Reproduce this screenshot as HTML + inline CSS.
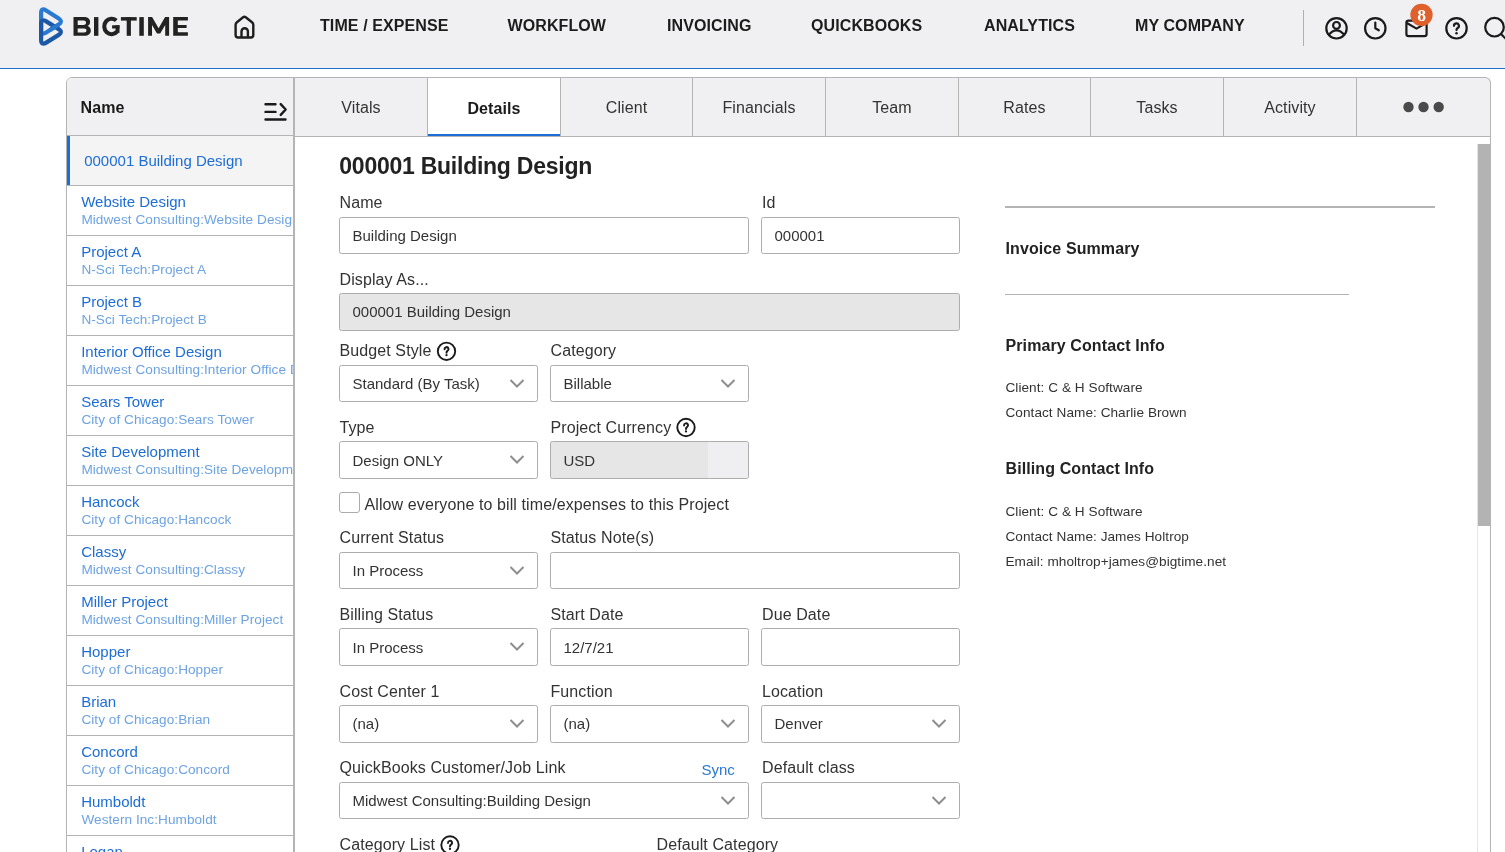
<!DOCTYPE html>
<html><head><meta charset="utf-8"><style>
*{margin:0;padding:0;box-sizing:border-box}
html,body{width:1505px;height:852px;overflow:hidden;background:#fff;font-family:"Liberation Sans",sans-serif;color:#333}
.a{position:absolute;white-space:nowrap;line-height:1}
.r{position:absolute}
svg{position:absolute;overflow:visible}
</style></head><body>
<div id="root" style="position:absolute;left:0;top:0;width:1505px;height:852px;overflow:hidden;will-change:transform">
<div class="r" style="left:0;top:0;width:1505px;height:68px;background:#f0f0f3"></div>
<div class="r" style="left:0;top:68px;width:1505px;height:1px;background:#1f70cf"></div>
<svg style="left:0;top:0" width="1505" height="68">
<path d="M41.10 13.20 Q41.10 7.20 46.14 10.45 L58.36 18.35 Q63.40 21.60 58.34 24.82 L46.16 32.58 Q41.10 35.80 41.10 29.80 Z" fill="none" stroke="#2a7ad2" stroke-width="4.2"/><path d="M41.10 24.20 Q41.10 18.20 46.20 21.36 L58.30 28.84 Q63.40 32.00 58.30 35.16 L46.20 42.64 Q41.10 45.80 41.10 39.80 Z" fill="none" stroke="#1c58a5" stroke-width="4.2"/><path d="M58.5 24.7 L50 30.1" fill="none" stroke="#2a7ad2" stroke-width="4.2" stroke-linecap="butt"/>
<path d="M235.6 24.8 Q235.6 23.2 236.9 22.2 L243.1 17.2 Q244.4 16.2 245.7 17.2 L252 22.2 Q253.3 23.2 253.3 24.8 V35 Q253.3 37.5 250.8 37.5 H238.1 Q235.6 37.5 235.6 35 Z" fill="none" stroke="#1e1e1e" stroke-width="2.4" stroke-linejoin="round"/>
<path d="M241.5 37.5 V31.4 A3.2 3.2 0 0 1 247.9 31.4 V37.5" fill="none" stroke="#1e1e1e" stroke-width="2.4"/>
<line x1="1303.5" y1="10" x2="1303.5" y2="46" stroke="#b0b0b0" stroke-width="1"/>
<circle cx="1336.5" cy="28.3" r="10.2" fill="none" stroke="#1a1a1a" stroke-width="2.2"/>
<circle cx="1336.5" cy="25.4" r="3.4" fill="none" stroke="#1a1a1a" stroke-width="2.2"/>
<path d="M1328.4 35.2 Q1336.5 25.6 1344.6 35.2" fill="none" stroke="#1a1a1a" stroke-width="2.2"/>
<circle cx="1375.3" cy="28.3" r="10.2" fill="none" stroke="#1a1a1a" stroke-width="2.2"/>
<path d="M1375.3 22.5 V28.3 L1378.8 30.3" fill="none" stroke="#1a1a1a" stroke-width="2.2" stroke-linecap="round" stroke-linejoin="round"/>
<rect x="1406.4" y="20.6" width="20.2" height="15.6" rx="2.2" fill="none" stroke="#1a1a1a" stroke-width="2.2"/>
<path d="M1406.8 23 L1416.5 28.6 L1426.2 23" fill="none" stroke="#1a1a1a" stroke-width="2.2"/>
<circle cx="1421.5" cy="14.8" r="11.15" fill="#e0602b"/>
<circle cx="1456.5" cy="28.3" r="10.2" fill="none" stroke="#1a1a1a" stroke-width="2.2"/>
<path d="M1454 25.8 A2.45 2.45 0 1 1 1457.6 28 Q1456.5 28.7 1456.5 30.1" fill="none" stroke="#1a1a1a" stroke-width="2.2" stroke-linecap="round"/><circle cx="1456.5" cy="33.2" r="1.25" fill="#1a1a1a"/>
<circle cx="1494.5" cy="27.2" r="9.3" fill="none" stroke="#1a1a1a" stroke-width="2.2"/>
<line x1="1501" y1="34" x2="1508" y2="41" stroke="#1a1a1a" stroke-width="2.2"/>
</svg>
<svg style="left:0;top:0" width="200" height="60"><g fill="#222">
<path fill-rule="evenodd" d="M73.5 17.1 H84.2 C88.2 17.1 90.1 19.3 90.1 21.9 C90.1 23.8 89.1 25.2 87.7 25.9 C89.7 26.5 90.8 28.2 90.8 30.5 C90.8 33.7 88.5 35.8 84.3 35.8 H73.5 Z M77.7 20.5 H83.6 C85.2 20.5 86 21.4 86 22.7 C86 24 85.2 24.9 83.6 24.9 H77.7 Z M77.7 28.4 H84.1 C85.7 28.4 86.5 29.3 86.5 30.4 C86.5 31.5 85.7 32.4 84.1 32.4 H77.7 Z"/>
<rect x="94" y="17.1" width="4.4" height="18.7"/>
<path d="M116.3 20.6 A7.3 7.75 0 1 0 117 31.6" fill="none" stroke="#222" stroke-width="4.1"/>
<rect x="112.1" y="25.3" width="7.4" height="3.2"/><rect x="115.5" y="25.3" width="4" height="7.6"/>
<rect x="120.9" y="17.1" width="15.8" height="3.5"/><rect x="126.7" y="17.1" width="4.2" height="18.7"/>
<rect x="139.3" y="17.1" width="4.5" height="18.7"/>
<path d="M148.1 35.8 V17.1 H152.1 L158.6 28.3 L165.1 17.1 H169.1 V35.8 H165.2 V24.9 L160.2 33.6 H157 L152 24.9 V35.8 Z"/>
<path d="M173.2 17.1 H187.9 V20.6 H177.8 V25 H186.6 V28.1 H177.8 V32.3 H187.9 V35.8 H173.2 Z"/>
</g></svg>
<div class="a" style="left:1417.2px;top:7px;font-size:17.5px;color:#fff;font-weight:bold;font-family:'Liberation Serif',serif;">8</div>

<div class="a" style="left:320px;top:18px;font-size:16px;color:#1c1c1c;letter-spacing:0.1px;font-weight:bold;">TIME / EXPENSE</div>

<div class="a" style="left:507.5px;top:18px;font-size:16px;color:#1c1c1c;letter-spacing:0.1px;font-weight:bold;">WORKFLOW</div>

<div class="a" style="left:667px;top:18px;font-size:16px;color:#1c1c1c;letter-spacing:0.1px;font-weight:bold;">INVOICING</div>

<div class="a" style="left:811px;top:18px;font-size:16px;color:#1c1c1c;letter-spacing:0.1px;font-weight:bold;">QUICKBOOKS</div>

<div class="a" style="left:984px;top:18px;font-size:16px;color:#1c1c1c;letter-spacing:0.1px;font-weight:bold;">ANALYTICS</div>

<div class="a" style="left:1135px;top:18px;font-size:16px;color:#1c1c1c;letter-spacing:0.1px;font-weight:bold;">MY COMPANY</div>

<div class="r" style="left:66px;top:77px;width:229px;height:800px;background:#fff;border:1px solid #b4b4b4;border-top-left-radius:6px"></div>
<div class="r" style="left:67px;top:78px;width:226px;height:57px;background:#f0f0f3;border-top-left-radius:5px"></div>
<div class="r" style="left:67px;top:135px;width:226px;height:1px;background:#b4b4b4"></div>
<div class="a" style="left:80.6px;top:100px;font-size:16px;color:#1a1a1a;letter-spacing:0.1px;font-weight:bold;">Name</div>

<svg style="left:0;top:0" width="300" height="140">
<path d="M265.5 104.2 H275.5 M265.5 111.9 H275.5 M265.5 119.5 H285.5 M280.7 104.1 L285.7 109.5 L280.7 114.9" fill="none" stroke="#1a1a1a" stroke-width="2.4" stroke-linecap="round" stroke-linejoin="round"/>
</svg>
<div class="r" style="left:67px;top:136px;width:226px;height:49px;background:#f4f4f4"></div>
<div class="r" style="left:67px;top:136px;width:3px;height:49px;background:#1c6fd6"></div>
<div class="a" style="left:84.2px;top:153px;font-size:15px;color:#1d6dd5;">000001 Building Design</div>

<div class="r" style="left:67px;top:136px;width:226px;height:716px;overflow:hidden">
<div class="r" style="left:0;top:49px;width:226px;height:1px;background:#b4b4b4"></div>
<div class="a" style="left:14.2px;top:58px;font-size:15px;color:#1d6dd5;">Website Design</div>

<div class="a" style="left:14.4px;top:77px;font-size:13.6px;color:#6ea3e2;letter-spacing:0.05px;">Midwest Consulting:Website Design</div>

<div class="r" style="left:0;top:99px;width:226px;height:1px;background:#b4b4b4"></div>
<div class="a" style="left:14.2px;top:108px;font-size:15px;color:#1d6dd5;">Project A</div>

<div class="a" style="left:14.4px;top:127px;font-size:13.6px;color:#6ea3e2;letter-spacing:0.05px;">N-Sci Tech:Project A</div>

<div class="r" style="left:0;top:149px;width:226px;height:1px;background:#b4b4b4"></div>
<div class="a" style="left:14.2px;top:158px;font-size:15px;color:#1d6dd5;">Project B</div>

<div class="a" style="left:14.4px;top:177px;font-size:13.6px;color:#6ea3e2;letter-spacing:0.05px;">N-Sci Tech:Project B</div>

<div class="r" style="left:0;top:199px;width:226px;height:1px;background:#b4b4b4"></div>
<div class="a" style="left:14.2px;top:208px;font-size:15px;color:#1d6dd5;">Interior Office Design</div>

<div class="a" style="left:14.4px;top:227px;font-size:13.6px;color:#6ea3e2;letter-spacing:0.05px;">Midwest Consulting:Interior Office Design</div>

<div class="r" style="left:0;top:249px;width:226px;height:1px;background:#b4b4b4"></div>
<div class="a" style="left:14.2px;top:258px;font-size:15px;color:#1d6dd5;">Sears Tower</div>

<div class="a" style="left:14.4px;top:277px;font-size:13.6px;color:#6ea3e2;letter-spacing:0.05px;">City of Chicago:Sears Tower</div>

<div class="r" style="left:0;top:299px;width:226px;height:1px;background:#b4b4b4"></div>
<div class="a" style="left:14.2px;top:308px;font-size:15px;color:#1d6dd5;">Site Development</div>

<div class="a" style="left:14.4px;top:327px;font-size:13.6px;color:#6ea3e2;letter-spacing:0.05px;">Midwest Consulting:Site Development</div>

<div class="r" style="left:0;top:349px;width:226px;height:1px;background:#b4b4b4"></div>
<div class="a" style="left:14.2px;top:358px;font-size:15px;color:#1d6dd5;">Hancock</div>

<div class="a" style="left:14.4px;top:377px;font-size:13.6px;color:#6ea3e2;letter-spacing:0.05px;">City of Chicago:Hancock</div>

<div class="r" style="left:0;top:399px;width:226px;height:1px;background:#b4b4b4"></div>
<div class="a" style="left:14.2px;top:408px;font-size:15px;color:#1d6dd5;">Classy</div>

<div class="a" style="left:14.4px;top:427px;font-size:13.6px;color:#6ea3e2;letter-spacing:0.05px;">Midwest Consulting:Classy</div>

<div class="r" style="left:0;top:449px;width:226px;height:1px;background:#b4b4b4"></div>
<div class="a" style="left:14.2px;top:458px;font-size:15px;color:#1d6dd5;">Miller Project</div>

<div class="a" style="left:14.4px;top:477px;font-size:13.6px;color:#6ea3e2;letter-spacing:0.05px;">Midwest Consulting:Miller Project</div>

<div class="r" style="left:0;top:499px;width:226px;height:1px;background:#b4b4b4"></div>
<div class="a" style="left:14.2px;top:508px;font-size:15px;color:#1d6dd5;">Hopper</div>

<div class="a" style="left:14.4px;top:527px;font-size:13.6px;color:#6ea3e2;letter-spacing:0.05px;">City of Chicago:Hopper</div>

<div class="r" style="left:0;top:549px;width:226px;height:1px;background:#b4b4b4"></div>
<div class="a" style="left:14.2px;top:558px;font-size:15px;color:#1d6dd5;">Brian</div>

<div class="a" style="left:14.4px;top:577px;font-size:13.6px;color:#6ea3e2;letter-spacing:0.05px;">City of Chicago:Brian</div>

<div class="r" style="left:0;top:599px;width:226px;height:1px;background:#b4b4b4"></div>
<div class="a" style="left:14.2px;top:608px;font-size:15px;color:#1d6dd5;">Concord</div>

<div class="a" style="left:14.4px;top:627px;font-size:13.6px;color:#6ea3e2;letter-spacing:0.05px;">City of Chicago:Concord</div>

<div class="r" style="left:0;top:649px;width:226px;height:1px;background:#b4b4b4"></div>
<div class="a" style="left:14.2px;top:658px;font-size:15px;color:#1d6dd5;">Humboldt</div>

<div class="a" style="left:14.4px;top:677px;font-size:13.6px;color:#6ea3e2;letter-spacing:0.05px;">Western Inc:Humboldt</div>

<div class="r" style="left:0;top:699px;width:226px;height:1px;background:#b4b4b4"></div>
<div class="a" style="left:14.2px;top:708px;font-size:15px;color:#1d6dd5;">Logan</div>

<div class="a" style="left:14.4px;top:727px;font-size:13.6px;color:#6ea3e2;letter-spacing:0.05px;">City of Chicago:Logan</div>

</div>
<div class="r" style="left:293px;top:77px;width:2px;height:775px;background:#b4b4b4"></div>
<div class="r" style="left:295px;top:77px;width:1196px;height:60px;background:#f0f0f3;border-top:1px solid #b4b4b4;border-right:1px solid #b4b4b4;border-bottom:1px solid #b4b4b4;border-top-right-radius:6px"></div>
<div class="a" style="left:295px;width:132px;text-align:center;top:100px;font-size:16px;letter-spacing:0.1px;color:#333">Vitals</div>
<div class="r" style="left:427px;top:78px;width:1px;height:58px;background:#b4b4b4"></div>
<div class="r" style="left:428px;top:78px;width:132px;height:58px;background:#fff"></div>
<div class="r" style="left:428px;top:134px;width:132px;height:2px;background:#1c6fd6"></div>
<div class="a" style="left:428px;width:132px;text-align:center;top:101px;font-size:16px;letter-spacing:0.1px;font-weight:bold;color:#1a1a1a">Details</div>
<div class="r" style="left:560px;top:78px;width:1px;height:58px;background:#b4b4b4"></div>
<div class="a" style="left:561px;width:131px;text-align:center;top:100px;font-size:16px;letter-spacing:0.1px;color:#333">Client</div>
<div class="r" style="left:692px;top:78px;width:1px;height:58px;background:#b4b4b4"></div>
<div class="a" style="left:693px;width:132px;text-align:center;top:100px;font-size:16px;letter-spacing:0.1px;color:#333">Financials</div>
<div class="r" style="left:825px;top:78px;width:1px;height:58px;background:#b4b4b4"></div>
<div class="a" style="left:826px;width:132px;text-align:center;top:100px;font-size:16px;letter-spacing:0.1px;color:#333">Team</div>
<div class="r" style="left:958px;top:78px;width:1px;height:58px;background:#b4b4b4"></div>
<div class="a" style="left:959px;width:131px;text-align:center;top:100px;font-size:16px;letter-spacing:0.1px;color:#333">Rates</div>
<div class="r" style="left:1090px;top:78px;width:1px;height:58px;background:#b4b4b4"></div>
<div class="a" style="left:1091px;width:132px;text-align:center;top:100px;font-size:16px;letter-spacing:0.1px;color:#333">Tasks</div>
<div class="r" style="left:1223px;top:78px;width:1px;height:58px;background:#b4b4b4"></div>
<div class="a" style="left:1224px;width:132px;text-align:center;top:100px;font-size:16px;letter-spacing:0.1px;color:#333">Activity</div>
<div class="r" style="left:1356px;top:78px;width:1px;height:58px;background:#b4b4b4"></div>
<svg style="left:0;top:0" width="1505" height="140">
<circle cx="1408.5" cy="107" r="5.2" fill="#4a4a4a"/><circle cx="1423.5" cy="107" r="5.2" fill="#4a4a4a"/><circle cx="1438.7" cy="107" r="5.2" fill="#4a4a4a"/>
</svg>
<div class="r" style="left:1490px;top:137px;width:1px;height:715px;background:#b4b4b4"></div>
<div class="r" style="left:1477px;top:144px;width:1px;height:708px;background:#e4e4e4"></div>
<div class="r" style="left:1478px;top:144px;width:12px;height:382px;background:#b3b3b3"></div>
<div class="a" style="left:339.3px;top:155px;font-size:23px;color:#222;font-weight:bold;letter-spacing:-0.25px;">000001 Building Design</div>

<div class="a" style="left:339.5px;top:195px;font-size:16px;color:#333;letter-spacing:0.1px;">Name</div>

<div class="r" style="left:339px;top:217px;width:410px;height:37px;border:1px solid #adadad;border-radius:2.5px;background:#fff"></div><div class="a" style="left:352.5px;top:228px;font-size:15px;color:#333;">Building Design</div>

<div class="a" style="left:762px;top:195px;font-size:16px;color:#333;letter-spacing:0.1px;">Id</div>

<div class="r" style="left:761px;top:217px;width:199px;height:37px;border:1px solid #adadad;border-radius:2.5px;background:#fff"></div><div class="a" style="left:774.5px;top:228px;font-size:15px;color:#333;">000001</div>

<div class="a" style="left:339.5px;top:272px;font-size:16px;color:#333;letter-spacing:0.1px;">Display As...</div>

<div class="r" style="left:339px;top:293px;width:621px;height:38px;border:1px solid #adadad;border-radius:2.5px;background:#e6e6e6"></div><div class="a" style="left:352.5px;top:304px;font-size:15px;color:#333;">000001 Building Design</div>

<div class="a" style="left:339.5px;top:343px;font-size:16px;color:#333;letter-spacing:0.1px;">Budget Style</div>

<svg style="left:0;top:0" width="1" height="1"><circle cx="446.5" cy="351.3" r="8.7" fill="none" stroke="#1a1a1a" stroke-width="1.9"/><path d="M444.55 349.20 A2.0 2.0 0 1 1 447.50 350.90 Q446.5 351.50 446.5 352.70" fill="none" stroke="#1a1a1a" stroke-width="2.0" stroke-linecap="round"/><circle cx="446.5" cy="355.20" r="1.15" fill="#1a1a1a"/></svg>
<div class="r" style="left:339px;top:365px;width:199px;height:37px;border:1px solid #adadad;border-radius:2.5px;background:#fff"></div><div class="a" style="left:352.5px;top:376px;font-size:15px;color:#333;">Standard (By Task)</div>
<svg style="left:0;top:0" width="1" height="1"><path d="M510.5 380.0 L517 386.5 L523.5 380.0" fill="none" stroke="#8e8e8e" stroke-width="2.0"/></svg>
<div class="a" style="left:550.5px;top:343px;font-size:16px;color:#333;letter-spacing:0.1px;">Category</div>

<div class="r" style="left:550px;top:365px;width:199px;height:37px;border:1px solid #adadad;border-radius:2.5px;background:#fff"></div><div class="a" style="left:563.5px;top:376px;font-size:15px;color:#333;">Billable</div>
<svg style="left:0;top:0" width="1" height="1"><path d="M721.5 380.0 L728 386.5 L734.5 380.0" fill="none" stroke="#8e8e8e" stroke-width="2.0"/></svg>
<div class="a" style="left:339.5px;top:420px;font-size:16px;color:#333;letter-spacing:0.1px;">Type</div>

<div class="r" style="left:339px;top:441px;width:199px;height:38px;border:1px solid #adadad;border-radius:2.5px;background:#fff"></div><div class="a" style="left:352.5px;top:453px;font-size:15px;color:#333;">Design ONLY</div>
<svg style="left:0;top:0" width="1" height="1"><path d="M510.5 456.0 L517 462.5 L523.5 456.0" fill="none" stroke="#8e8e8e" stroke-width="2.0"/></svg>
<div class="a" style="left:550.5px;top:420px;font-size:16px;color:#333;letter-spacing:0.1px;">Project Currency</div>

<svg style="left:0;top:0" width="1" height="1"><circle cx="686" cy="427.5" r="8.7" fill="none" stroke="#1a1a1a" stroke-width="1.9"/><path d="M684.05 425.40 A2.0 2.0 0 1 1 687.00 427.10 Q686 427.70 686 428.90" fill="none" stroke="#1a1a1a" stroke-width="2.0" stroke-linecap="round"/><circle cx="686" cy="431.40" r="1.15" fill="#1a1a1a"/></svg>
<div class="r" style="left:550px;top:441px;width:199px;height:38px;border:1px solid #adadad;border-radius:2.5px;background:#e6e6e6"></div><div class="a" style="left:563.5px;top:453px;font-size:15px;color:#333;">USD</div>

<div class="r" style="left:708px;top:442px;width:40px;height:36px;background:#efeff1;border-radius:0 2px 2px 0"></div>
<div class="r" style="left:339px;top:492px;width:21px;height:21px;border:1px solid #ababab;border-radius:3px;background:#fff"></div>
<div class="a" style="left:364.5px;top:497px;font-size:16px;color:#333;letter-spacing:0.1px;">Allow everyone to bill time/expenses to this Project</div>

<div class="a" style="left:339.5px;top:530px;font-size:16px;color:#333;letter-spacing:0.1px;">Current Status</div>

<div class="r" style="left:339px;top:552px;width:199px;height:37px;border:1px solid #adadad;border-radius:2.5px;background:#fff"></div><div class="a" style="left:352.5px;top:563px;font-size:15px;color:#333;">In Process</div>
<svg style="left:0;top:0" width="1" height="1"><path d="M510.5 567.0 L517 573.5 L523.5 567.0" fill="none" stroke="#8e8e8e" stroke-width="2.0"/></svg>
<div class="a" style="left:550.5px;top:530px;font-size:16px;color:#333;letter-spacing:0.1px;">Status Note(s)</div>

<div class="r" style="left:550px;top:552px;width:410px;height:37px;border:1px solid #adadad;border-radius:2.5px;background:#fff"></div>
<div class="a" style="left:339.5px;top:607px;font-size:16px;color:#333;letter-spacing:0.1px;">Billing Status</div>

<div class="r" style="left:339px;top:628px;width:199px;height:38px;border:1px solid #adadad;border-radius:2.5px;background:#fff"></div><div class="a" style="left:352.5px;top:640px;font-size:15px;color:#333;">In Process</div>
<svg style="left:0;top:0" width="1" height="1"><path d="M510.5 643.0 L517 649.5 L523.5 643.0" fill="none" stroke="#8e8e8e" stroke-width="2.0"/></svg>
<div class="a" style="left:550.5px;top:607px;font-size:16px;color:#333;letter-spacing:0.1px;">Start Date</div>

<div class="r" style="left:550px;top:628px;width:199px;height:38px;border:1px solid #adadad;border-radius:2.5px;background:#fff"></div><div class="a" style="left:563.5px;top:640px;font-size:15px;color:#333;">12/7/21</div>

<div class="a" style="left:762px;top:607px;font-size:16px;color:#333;letter-spacing:0.1px;">Due Date</div>

<div class="r" style="left:761px;top:628px;width:199px;height:38px;border:1px solid #adadad;border-radius:2.5px;background:#fff"></div>
<div class="a" style="left:339.5px;top:684px;font-size:16px;color:#333;letter-spacing:0.1px;">Cost Center 1</div>

<div class="r" style="left:339px;top:705px;width:199px;height:38px;border:1px solid #adadad;border-radius:2.5px;background:#fff"></div><div class="a" style="left:352.5px;top:716px;font-size:15px;color:#333;">(na)</div>
<svg style="left:0;top:0" width="1" height="1"><path d="M510.5 720.0 L517 726.5 L523.5 720.0" fill="none" stroke="#8e8e8e" stroke-width="2.0"/></svg>
<div class="a" style="left:550.5px;top:684px;font-size:16px;color:#333;letter-spacing:0.1px;">Function</div>

<div class="r" style="left:550px;top:705px;width:199px;height:38px;border:1px solid #adadad;border-radius:2.5px;background:#fff"></div><div class="a" style="left:563.5px;top:716px;font-size:15px;color:#333;">(na)</div>
<svg style="left:0;top:0" width="1" height="1"><path d="M721.5 720.0 L728 726.5 L734.5 720.0" fill="none" stroke="#8e8e8e" stroke-width="2.0"/></svg>
<div class="a" style="left:762px;top:684px;font-size:16px;color:#333;letter-spacing:0.1px;">Location</div>

<div class="r" style="left:761px;top:705px;width:199px;height:38px;border:1px solid #adadad;border-radius:2.5px;background:#fff"></div><div class="a" style="left:774.5px;top:716px;font-size:15px;color:#333;">Denver</div>
<svg style="left:0;top:0" width="1" height="1"><path d="M932.5 720.0 L939 726.5 L945.5 720.0" fill="none" stroke="#8e8e8e" stroke-width="2.0"/></svg>
<div class="a" style="left:339.5px;top:760px;font-size:16px;color:#333;letter-spacing:0.1px;">QuickBooks Customer/Job Link</div>

<div class="a" style="left:701.5px;top:762px;font-size:15px;color:#2a78d0;">Sync</div>

<div class="r" style="left:339px;top:782px;width:410px;height:37px;border:1px solid #adadad;border-radius:2.5px;background:#fff"></div><div class="a" style="left:352.5px;top:793px;font-size:15px;color:#333;">Midwest Consulting:Building Design</div>
<svg style="left:0;top:0" width="1" height="1"><path d="M721.5 797.0 L728 803.5 L734.5 797.0" fill="none" stroke="#8e8e8e" stroke-width="2.0"/></svg>
<div class="a" style="left:762px;top:760px;font-size:16px;color:#333;letter-spacing:0.1px;">Default class</div>

<div class="r" style="left:761px;top:782px;width:199px;height:37px;border:1px solid #adadad;border-radius:2.5px;background:#fff"></div><svg style="left:0;top:0" width="1" height="1"><path d="M932.5 797.0 L939 803.5 L945.5 797.0" fill="none" stroke="#8e8e8e" stroke-width="2.0"/></svg>
<div class="a" style="left:339.5px;top:837px;font-size:16px;color:#333;letter-spacing:0.1px;">Category List</div>

<svg style="left:0;top:0" width="1" height="1"><circle cx="450" cy="845" r="8.7" fill="none" stroke="#1a1a1a" stroke-width="1.9"/><path d="M448.05 842.90 A2.0 2.0 0 1 1 451.00 844.60 Q450 845.20 450 846.40" fill="none" stroke="#1a1a1a" stroke-width="2.0" stroke-linecap="round"/><circle cx="450" cy="848.90" r="1.15" fill="#1a1a1a"/></svg>
<div class="a" style="left:656.5px;top:837px;font-size:16px;color:#333;letter-spacing:0.1px;">Default Category</div>

<div class="r" style="left:1005px;top:206px;width:430px;height:2px;background:#b4b4b4"></div>
<div class="a" style="left:1005.5px;top:241px;font-size:16px;color:#222;letter-spacing:0.1px;font-weight:bold;">Invoice Summary</div>

<div class="r" style="left:1005px;top:294px;width:344px;height:1px;background:#b4b4b4"></div>
<div class="a" style="left:1005.5px;top:338px;font-size:16px;color:#222;letter-spacing:0.1px;font-weight:bold;">Primary Contact Info</div>

<div class="a" style="left:1005.5px;top:381px;font-size:13.6px;color:#333;letter-spacing:0.05px;">Client: C &amp; H Software</div>

<div class="a" style="left:1005.5px;top:406px;font-size:13.6px;color:#333;letter-spacing:0.05px;">Contact Name: Charlie Brown</div>

<div class="a" style="left:1005.5px;top:461px;font-size:16px;color:#222;letter-spacing:0.1px;font-weight:bold;">Billing Contact Info</div>

<div class="a" style="left:1005.5px;top:505px;font-size:13.6px;color:#333;letter-spacing:0.05px;">Client: C &amp; H Software</div>

<div class="a" style="left:1005.5px;top:530px;font-size:13.6px;color:#333;letter-spacing:0.05px;">Contact Name: James Holtrop</div>

<div class="a" style="left:1005.5px;top:555px;font-size:13.6px;color:#333;letter-spacing:0.05px;">Email: mholtrop+james@bigtime.net</div>

</div>
</body></html>
